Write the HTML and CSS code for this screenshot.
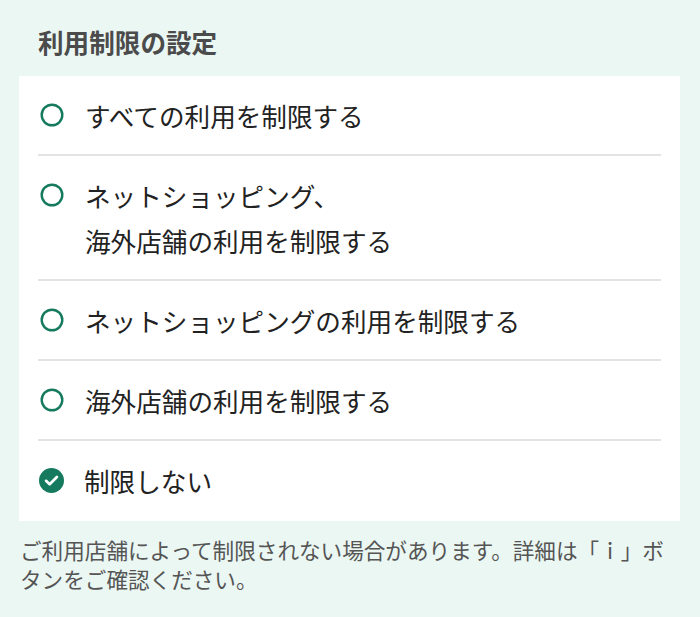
FILE: index.html
```html
<!DOCTYPE html>
<html lang="ja">
<head>
  <meta charset="UTF-8">
  <meta name="viewport" content="width=device-width, initial-scale=1.0">
  <title>利用制限の設定</title>
  <link rel="stylesheet" href="styles.css">
</head>
<body>
  <div class="limit-page">
    <h2 class="section-title">利用制限の設定</h2>
    <ul class="option-list">
      <li class="option">
        <svg class="radio" viewBox="0 0 24 24"><circle cx="12" cy="12" r="10.3" fill="none" stroke="#167a5e" stroke-width="2.4"/></svg>
        <span class="label">すべての利用を制限する</span>
      </li>
      <li class="option">
        <svg class="radio" viewBox="0 0 24 24"><circle cx="12" cy="12" r="10.3" fill="none" stroke="#167a5e" stroke-width="2.4"/></svg>
        <span class="label">ネットショッピング、<br>海外店舗の利用を制限する</span>
      </li>
      <li class="option">
        <svg class="radio" viewBox="0 0 24 24"><circle cx="12" cy="12" r="10.3" fill="none" stroke="#167a5e" stroke-width="2.4"/></svg>
        <span class="label">ネットショッピングの利用を制限する</span>
      </li>
      <li class="option">
        <svg class="radio" viewBox="0 0 24 24"><circle cx="12" cy="12" r="10.3" fill="none" stroke="#167a5e" stroke-width="2.4"/></svg>
        <span class="label">海外店舗の利用を制限する</span>
      </li>
      <li class="option">
        <svg class="radio checked" viewBox="0 0 24 24"><circle cx="12" cy="12" r="12" fill="#167a5e"/><path d="M6.8 12.3l3.4 3.3 7-7" fill="none" stroke="#fff" stroke-width="2.6" stroke-linecap="round" stroke-linejoin="round"/></svg>
        <span class="label">制限しない</span>
      </li>
    </ul>
    <p class="note">ご利用店舗によって制限されない場合があります。詳細は「ｉ」ボタンをご確認ください。</p>
  </div>
</body>
</html>
```

FILE: styles.css
```css
body {
  margin: 0;
  background: #ebf7f3;
  font-family: "Noto Sans CJK JP", "Noto Sans", sans-serif;
  color: #222;
}
.limit-page {
  padding: 0 20px 0 19px;
}
.section-title {
  margin: 0;
  padding: 24px 0 0 19px;
  height: 76px;
  box-sizing: border-box;
  font-size: 25.6px;
  line-height: 36px;
  font-weight: bold;
  color: #4b4b4b;
}
.option-list {
  list-style: none;
  margin: 0;
  padding: 0 19px;
  background: #fff;
}
.option {
  display: flex;
  align-items: flex-start;
  padding: 17px 0 16px;
  border-bottom: 2px solid #e3e3e3;
}
.option:last-child {
  border-bottom: none;
  padding-bottom: 18px;
}
.radio {
  flex: none;
  width: 24px;
  height: 24px;
  margin: 10px 21px 0 2px;
}
.radio.checked {
  width: 25px;
  height: 25px;
  margin: 10px 20px 0 1px;
}
.label {
  font-size: 25.6px;
  line-height: 45px;
}
.note {
  margin: 0;
  padding: 14px 0 0 1px;
  font-size: 21.6px;
  line-height: 29px;
  color: #555;
}
```
